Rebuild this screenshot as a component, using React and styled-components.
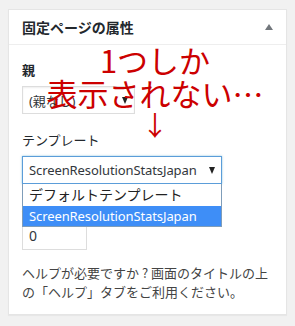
import React from 'react';
import styled, { createGlobalStyle } from 'styled-components';

const GlobalStyle = createGlobalStyle`
  html, body {
    margin: 0;
    padding: 0;
    background: #f1f1f1;
  }
  body {
    font-family: "Noto Sans", "Noto Sans CJK JP", sans-serif;
    color: #444;
  }
`;

const Page = styled.div`
  padding: 9px 8px;
`;

const Card = styled.div`
  position: relative;
  width: 277px;
  height: 304px;
  background: #fff;
  border: 1px solid #e5e5e5;
  box-shadow: 0 1px 1px rgba(0, 0, 0, 0.04);
`;

const Header = styled.div`
  display: flex;
  align-items: center;
  justify-content: space-between;
  height: 34px;
  padding: 0 13px;
  border-bottom: 1px solid #eee;
`;

const Title = styled.h2`
  margin: 0;
  font-size: 14px;
  font-weight: 700;
  color: #23282d;
  font-family: "Noto Sans CJK JP", sans-serif;
`;

const Toggle = styled.span`
  width: 0;
  height: 0;
  border-left: 4px solid transparent;
  border-right: 4px solid transparent;
  border-bottom: 6px solid #72777c;
`;

const Body = styled.div`
  padding: 15px 13px 12px;
`;

const Label = styled.p`
  margin: ${p => p.$top}px 0 7px;
  font-size: 13px;
  line-height: 19px;
  font-weight: ${p => (p.$bold ? 700 : 400)};
  color: #23282d;
  font-family: "Noto Sans CJK JP", sans-serif;
`;

const SelectWrap = styled.div`
  position: relative;
  width: ${p => p.$width}px;
`;

const Select = styled.div`
  box-sizing: border-box;
  display: flex;
  align-items: center;
  justify-content: space-between;
  width: 100%;
  height: 28px;
  padding: 0 6px;
  background: #fff;
  border: 1px solid ${p => (p.$focus ? '#5b9dd9' : '#ddd')};
  box-shadow: ${p => (p.$focus ? '0 0 2px rgba(30, 140, 190, 0.5)' : 'inset 0 1px 2px rgba(0,0,0,.07)')};
  font-size: 13px;
  letter-spacing: -0.1px;
  color: #32373c;
  white-space: nowrap;
  overflow: hidden;
`;

const Arrow = styled.span`
  flex: none;
  width: 0;
  height: 0;
  margin-left: 4px;
  border-left: 3.5px solid transparent;
  border-right: 3.5px solid transparent;
  border-top: 7px solid #222;
`;

const List = styled.ul`
  position: absolute;
  top: 100%;
  left: 0;
  right: 0;
  margin: 0;
  padding: 0;
  list-style: none;
  background: #fff;
  border: 1px solid #7f9db9;
  border-top: none;
  z-index: 2;
`;

const Option = styled.li`
  height: ${p => (p.$selected ? 20 : 22)}px;
  line-height: ${p => (p.$selected ? 20 : 22)}px;
  padding: 0 6px;
  font-size: ${p => (p.$latin ? 13 : 14)}px;
  letter-spacing: ${p => (p.$latin ? '-0.1px' : '0')};
  font-family: "Noto Sans", "Noto Sans CJK JP", sans-serif;
  color: ${p => (p.$selected ? '#fff' : '#222')};
  background: ${p => (p.$selected ? '#3e8ef7' : '#fff')};
  white-space: nowrap;
`;

const Input = styled.div`
  box-sizing: border-box;
  width: 65px;
  height: 28px;
  padding: 0 6px;
  line-height: 26px;
  border: 1px solid #ddd;
  font-size: 14px;
  color: #32373c;
`;

const Help = styled.p`
  margin: 13px 0 0;
  font-size: 13px;
  line-height: 19px;
  color: #444;
  font-family: "Noto Sans CJK JP", sans-serif;
`;

const Note = styled.div`
  position: absolute;
  top: 33px;
  left: 31px;
  width: 230px;
  display: flex;
  flex-direction: column;
  align-items: center;
  color: #cc0000;
  font-family: "Noto Sans CJK JP", sans-serif;
  font-size: 31px;
  line-height: 33px;
  pointer-events: none;
  z-index: 3;
`;

const NoteArrow = styled.span`
  font-size: 27px;
  line-height: 28px;
  margin-top: 2px;
`;

export default function App() {
  return (
    <Page>
      <GlobalStyle />
      <Card>
        <Header>
          <Title>固定ページの属性</Title>
          <Toggle />
        </Header>
        <Body>
          <Label $top={0} $bold>親</Label>
          <SelectWrap $width={113}>
            <Select>
              <span>(親なし)</span>
              <Arrow />
            </Select>
          </SelectWrap>
          <Label $top={16}>テンプレート</Label>
          <SelectWrap $width={200}>
            <Select $focus>
              <span>ScreenResolutionStatsJapan</span>
              <Arrow />
            </Select>
            <List>
              <Option>デフォルトテンプレート</Option>
              <Option $selected $latin>ScreenResolutionStatsJapan</Option>
            </List>
          </SelectWrap>
          <Label $top={12} $bold>順序</Label>
          <Input>0</Input>
          <Help>
            ヘルプが必要ですか ? 画面のタイトルの上の「ヘルプ」タブをご利用ください。
          </Help>
        </Body>
        <Note>
          <span>1つしか</span>
          <span>表示されない…</span>
          <NoteArrow>↓</NoteArrow>
        </Note>
      </Card>
    </Page>
  );
}
